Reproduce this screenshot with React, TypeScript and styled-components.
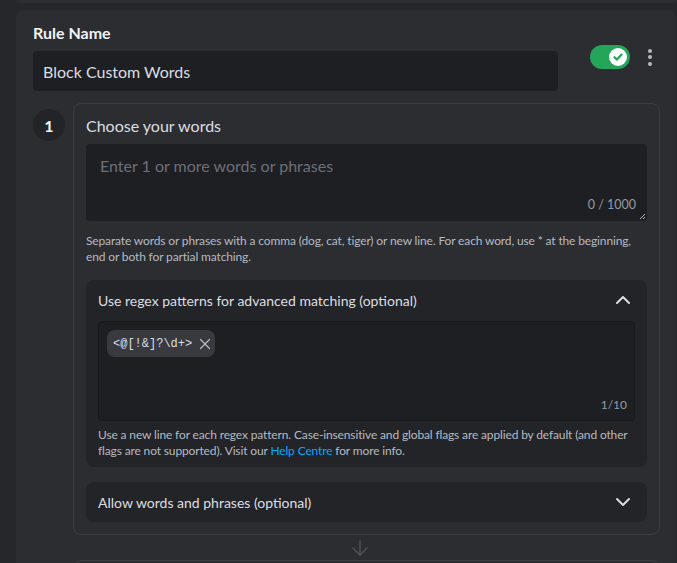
import styled, { createGlobalStyle } from "styled-components";
import { ChevronUp, ChevronDown, X, ArrowDown } from "lucide-react";

const GlobalStyle = createGlobalStyle`
  html, body {
    margin: 0;
    padding: 0;
    background: #26272b;
    overflow: hidden;
  }
  body {
    font-family: Lato, "Noto Sans", sans-serif;
    color: #dbdee1;
  }
  * {
    box-sizing: border-box;
  }
`;

const Page = styled.div`
  display: flex;
  flex-direction: column;
  gap: 7px;
  padding: 0 1px 0 16px;
`;

const PrevCard = styled.div`
  height: 3px;
  background: #2b2d31;
  border-radius: 0 0 8px 8px;
`;

const RuleCard = styled.div`
  background: #2b2d31;
  border-radius: 8px;
  padding: 13px 16px 0 17px;
`;

const Header = styled.div`
  display: grid;
  grid-template-columns: 1fr auto;
  column-gap: 32px;
  align-items: start;
`;

const Field = styled.div`
  display: flex;
  flex-direction: column;
  gap: 8px;
`;

const Label = styled.label`
  font-size: 16px;
  line-height: 20px;
  font-weight: 700;
  color: #f2f3f5;
`;

const NameInput = styled.input`
  height: 40px;
  border: none;
  outline: none;
  border-radius: 4px;
  background: #1e1f22;
  color: #dbdee1;
  font-family: inherit;
  font-size: 16px;
  padding: 0 10px;
`;

const Controls = styled.div`
  display: flex;
  align-items: center;
  gap: 10px;
  margin-top: 22px;
`;

const Toggle = styled.div`
  width: 40px;
  height: 24px;
  border-radius: 12px;
  background: #23a55a;
  display: flex;
  align-items: center;
  justify-content: flex-end;
  padding: 0 3px;
`;

const Knob = styled.div`
  width: 18px;
  height: 18px;
  border-radius: 50%;
  background: #fff;
  display: flex;
  align-items: center;
  justify-content: center;
`;

const Kebab = styled.div`
  width: 20px;
  display: flex;
  flex-direction: column;
  align-items: center;
  gap: 2.5px;
`;

const Dot = styled.span`
  width: 4px;
  height: 4px;
  border-radius: 50%;
  background: #b5bac1;
`;

const StepRow = styled.div<{ $gap: number }>`
  display: grid;
  grid-template-columns: 32px 1fr;
  column-gap: 8px;
  margin-top: ${(p) => p.$gap}px;
`;

const StepNumber = styled.div`
  width: 32px;
  height: 32px;
  margin-top: 6px;
  border-radius: 50%;
  background: #232428;
  color: #f2f3f5;
  font-weight: 700;
  font-size: 16px;
  display: flex;
  align-items: center;
  justify-content: center;
`;

const StepCard = styled.div`
  border: 1px solid #3b3d43;
  border-radius: 8px;
  padding: 12px;
  display: flex;
  flex-direction: column;
`;

const StepTitle = styled.div`
  font-size: 16px;
  line-height: 20px;
  color: #dbdee1;
`;

const WordsBox = styled.div`
  position: relative;
  margin-top: 8px;
  height: 77px;
  background: #1e1f22;
  border-radius: 4px;
  padding: 12px 14px;
`;

const Placeholder = styled.div`
  font-size: 16px;
  line-height: 20px;
  color: #6d6f78;
`;

const Counter = styled.span<{ $right: number; $bottom: number; $size: number }>`
  position: absolute;
  right: ${(p) => p.$right}px;
  bottom: ${(p) => p.$bottom}px;
  font-size: ${(p) => p.$size}px;
  line-height: 16px;
  color: #949ba4;
`;

const Grip = styled.svg`
  position: absolute;
  right: 1px;
  bottom: 1px;
`;

const Hint = styled.p<{ $gap: number }>`
  margin: ${(p) => p.$gap}px 0 0 0;
  font-size: 12px;
  line-height: 16px;
  letter-spacing: -0.14px;
  color: #b5bac1;
`;

const Link = styled.a`
  color: #00a8fc;
  text-decoration: none;
`;

const Section = styled.div<{ $gap: number }>`
  margin-top: ${(p) => p.$gap}px;
  background: #232428;
  border-radius: 8px;
  padding: 0 12px;
`;

const SectionHeader = styled.div`
  height: 40px;
  display: flex;
  align-items: center;
  justify-content: space-between;
  font-size: 14px;
  color: #dbdee1;
`;

const SectionBody = styled.div`
  padding: 1px 0 8px 0;
`;

const RegexBox = styled.div`
  position: relative;
  height: 100px;
  background: #1e1f22;
  border: 1px solid #18191c;
  border-radius: 4px;
  padding: 8px;
`;

const Chip = styled.span`
  display: inline-flex;
  align-items: center;
  gap: 4px;
  height: 27px;
  padding: 0 1px 0 6px;
  border-radius: 8px;
  background: #383a40;
  font-family: "Liberation Mono", "DejaVu Sans Mono", monospace;
  font-size: 12px;
  color: #dbdee1;
`;

const Connector = styled.div`
  height: 25px;
  display: flex;
  align-items: center;
  justify-content: center;
  padding-right: 14px;
  color: #4e5058;
`;

const StepColumn = styled.div`
  display: flex;
  flex-direction: column;
`;

const NextCard = styled.div`
  height: 80px;
  border: 1px solid #3b3d43;
  border-radius: 8px;
`;

export default function App() {
  return (
    <>
      <GlobalStyle />
      <Page>
        <PrevCard />
        <RuleCard>
          <Header>
            <Field>
              <Label>Rule Name</Label>
              <NameInput defaultValue="Block Custom Words" />
            </Field>
            <Controls>
              <Toggle>
                <Knob>
                  <svg width="12" height="12" viewBox="0 0 12 12">
                    <path
                      d="M2.5 6.2 5 8.6 9.6 3.6"
                      fill="none"
                      stroke="#23a55a"
                      strokeWidth="2.2"
                      strokeLinecap="round"
                      strokeLinejoin="round"
                    />
                  </svg>
                </Knob>
              </Toggle>
              <Kebab>
                <Dot />
                <Dot />
                <Dot />
              </Kebab>
            </Controls>
          </Header>

          <StepRow $gap={12}>
            <StepNumber>1</StepNumber>
            <StepColumn>
              <StepCard>
                <StepTitle>Choose your words</StepTitle>
                <WordsBox>
                  <Placeholder>Enter 1 or more words or phrases</Placeholder>
                  <Counter $right={11} $bottom={8} $size={12.5}>0 / 1000</Counter>
                  <Grip width="7" height="7" viewBox="0 0 7 7">
                    <path d="M1 6 6 1M4 6 6 4" stroke="#b5bac1" strokeWidth="1" />
                  </Grip>
                </WordsBox>
                <Hint $gap={12}>
                  Separate words or phrases with a comma (dog, cat, tiger) or new line. For each word,
                  use * at the beginning, end or both for partial matching.
                </Hint>

                <Section $gap={15}>
                  <SectionHeader>
                    <span>Use regex patterns for advanced matching (optional)</span>
                    <ChevronUp size={24} strokeWidth={2} />
                  </SectionHeader>
                  <SectionBody>
                    <RegexBox>
                      <Chip>
                        {"<@[!&]?\\d+>"}
                        <X size={18} strokeWidth={1.6} color="#b5bac1" />
                      </Chip>
                      <Counter $right={7} $bottom={7} $size={12}>1/10</Counter>
                    </RegexBox>
                    <Hint $gap={6}>
                      Use a new line for each regex pattern. Case-insensitive and global flags are
                      applied by default (and other flags are not supported). Visit our{" "}
                      <Link>Help Centre</Link> for more info.
                    </Hint>
                  </SectionBody>
                </Section>

                <Section $gap={15}>
                  <SectionHeader>
                    <span>Allow words and phrases (optional)</span>
                    <ChevronDown size={24} strokeWidth={2} />
                  </SectionHeader>
                </Section>
              </StepCard>
              <Connector>
                <ArrowDown size={24} strokeWidth={1.5} />
              </Connector>
            </StepColumn>
          </StepRow>

          <StepRow $gap={0}>
            <div />
            <NextCard />
          </StepRow>
        </RuleCard>
      </Page>
    </>
  );
}
